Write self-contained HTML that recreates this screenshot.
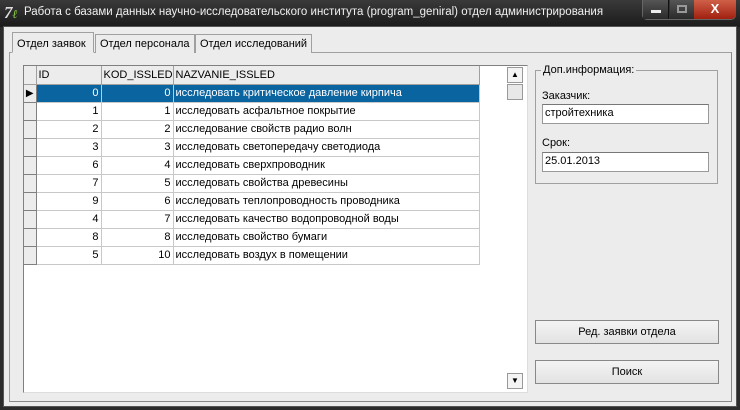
<!DOCTYPE html>
<html><head><meta charset="utf-8"><style>
*{box-sizing:border-box;margin:0;padding:0}
body{width:740px;height:410px;overflow:hidden;background:#2b2b2b;font-family:"Liberation Sans",sans-serif;font-size:11px;color:#000;position:relative}
.abs{position:absolute}
#title{left:0;top:0;width:740px;height:27px;background:linear-gradient(#3a3a3a,#1a1a1a);}
#body{left:3px;top:26px;width:734px;height:381px;background:#ececec;border:1px solid #555}
.tab{position:absolute;top:34px;height:19px;border:1px solid #a0a0a0;border-bottom:none;background:#ececec;padding:3px 4px;font-size:11px;white-space:nowrap}
#panel{left:9px;top:52px;width:723px;height:350px;border:1px solid #a0a0a0;border-right-color:#888;border-bottom-color:#888;background:#ececec}
#grid{left:23px;top:65px;width:505px;height:328px;background:#fff;border:1px solid #808080;border-right-color:#ddd;border-bottom-color:#ddd}
table{border-collapse:collapse;position:absolute;left:0;top:0;table-layout:fixed;width:455px}
td{height:18px;border-right:1px solid #c8c8c8;border-bottom:1px solid #c8c8c8;padding:0 2px;font-size:11px;white-space:nowrap;overflow:hidden}
td.ind{background:#ececec;border-right:1px solid #808080;border-bottom:1px solid #808080;padding:0}
tr.h td{background:#ececec;border-right:1px solid #a0a0a0;border-bottom:1px solid #a0a0a0}
td.n{text-align:right}
tr.sel td.d{background:#0a64a0;color:#fff}
.sb{left:507px;top:67px;width:16px;height:16px;border:1px solid #999;background:#f4f4f4}
.btn{position:absolute;left:535px;width:184px;height:24px;border:1px solid #888;background:linear-gradient(#f4f4f4,#e2e2e2);text-align:center;line-height:22px;font-size:11px}
.edit{position:absolute;left:542px;width:167px;height:20px;background:#fff;border:1px solid #999;border-top-color:#777;padding:2px 2px;font-size:11px}
</style></head><body>
<div id="title" class="abs">
 <div class="abs" style="left:4px;top:3px;color:#ddd;font:bold italic 17px 'Liberation Serif',serif">7<span style="color:#8c4;font-size:12px">ℓ</span></div>
 <div class="abs" style="left:24px;top:6px;color:#f0f0f0;font-size:11.5px;white-space:nowrap">Работа с базами данных научно-исследовательского института (program_geniral) отдел администрирования</div>
 <div class="abs" style="left:642px;top:0;width:94px;height:20px;border:1px solid #666;border-top:none;border-radius:0 0 5px 5px;background:#333"></div>
 <div class="abs" style="left:643px;top:0;width:26px;height:19px;background:linear-gradient(#555,#2a2a2a);border-right:1px solid #111"><div class="abs" style="left:8px;top:10px;width:10px;height:3px;background:#eee"></div></div>
 <div class="abs" style="left:670px;top:0;width:24px;height:19px;background:linear-gradient(#555,#2a2a2a)"><div class="abs" style="left:7px;top:5px;width:10px;height:8px;border:2px solid #999"></div></div>
 <div class="abs" style="left:694px;top:0;width:42px;height:19px;background:linear-gradient(#d06048,#a02010);border-radius:0 0 5px 0;color:#fff;font-weight:bold;text-align:center;font-size:13px;line-height:17px">X</div>
</div>
<div id="body" class="abs"></div>
<div id="panel" class="abs"></div>
<div class="tab" style="left:12px;top:32px;height:21px;border-bottom:1px solid #ececec;padding-top:5px;z-index:2;width:82px">Отдел заявок</div>
<div class="tab" style="left:95px">Отдел персонала</div>
<div class="tab" style="left:195px">Отдел исследований</div>
<div id="grid" class="abs">
<table>
<colgroup><col style="width:12px"><col style="width:65px"><col style="width:72px"><col style="width:306px"></colgroup>
<tr class="h"><td class="ind"></td><td>ID</td><td>KOD_ISSLED</td><td>NAZVANIE_ISSLED</td></tr>
<tr class="sel"><td class="ind" style="font-size:10px;text-align:center">&#9654;</td><td class="n d">0</td><td class="n d">0</td><td class="d">исследовать критическое давление кирпича</td></tr>
<tr><td class="ind"></td><td class="n">1</td><td class="n">1</td><td>исследовать асфальтное покрытие</td></tr>
<tr><td class="ind"></td><td class="n">2</td><td class="n">2</td><td>исследование свойств радио волн</td></tr>
<tr><td class="ind"></td><td class="n">3</td><td class="n">3</td><td>исследовать светопередачу светодиода</td></tr>
<tr><td class="ind"></td><td class="n">6</td><td class="n">4</td><td>исследовать сверхпроводник</td></tr>
<tr><td class="ind"></td><td class="n">7</td><td class="n">5</td><td>исследовать свойства древесины</td></tr>
<tr><td class="ind"></td><td class="n">9</td><td class="n">6</td><td>исследовать теплопроводность проводника</td></tr>
<tr><td class="ind"></td><td class="n">4</td><td class="n">7</td><td>исследовать качество водопроводной воды</td></tr>
<tr><td class="ind"></td><td class="n">8</td><td class="n">8</td><td>исследовать свойство бумаги</td></tr>
<tr><td class="ind"></td><td class="n">5</td><td class="n">10</td><td>исследовать воздух в помещении</td></tr>
</table>
</div>
<div class="abs sb" style="font-size:8px;text-align:center;line-height:13px">&#9650;</div>
<div class="abs sb" style="top:84px;height:16px;background:#e8e8e8"></div>
<div class="abs sb" style="top:373px;font-size:8px;text-align:center;line-height:14px">&#9660;</div>
<div class="abs" style="left:535px;top:70px;width:183px;height:114px;border:1px solid #a0a0a0"></div>
<div class="abs" style="left:541px;top:64px;background:#ececec;padding:0 2px">Доп.информация:</div>
<div class="abs" style="left:542px;top:90px">Заказчик:</div>
<div class="edit" style="top:104px">стройтехника</div>
<div class="abs" style="left:542px;top:137px">Срок:</div>
<div class="edit" style="top:152px">25.01.2013</div>
<div class="btn" style="top:320px">Ред. заявки отдела</div>
<div class="btn" style="top:360px">Поиск</div>
</body></html>
